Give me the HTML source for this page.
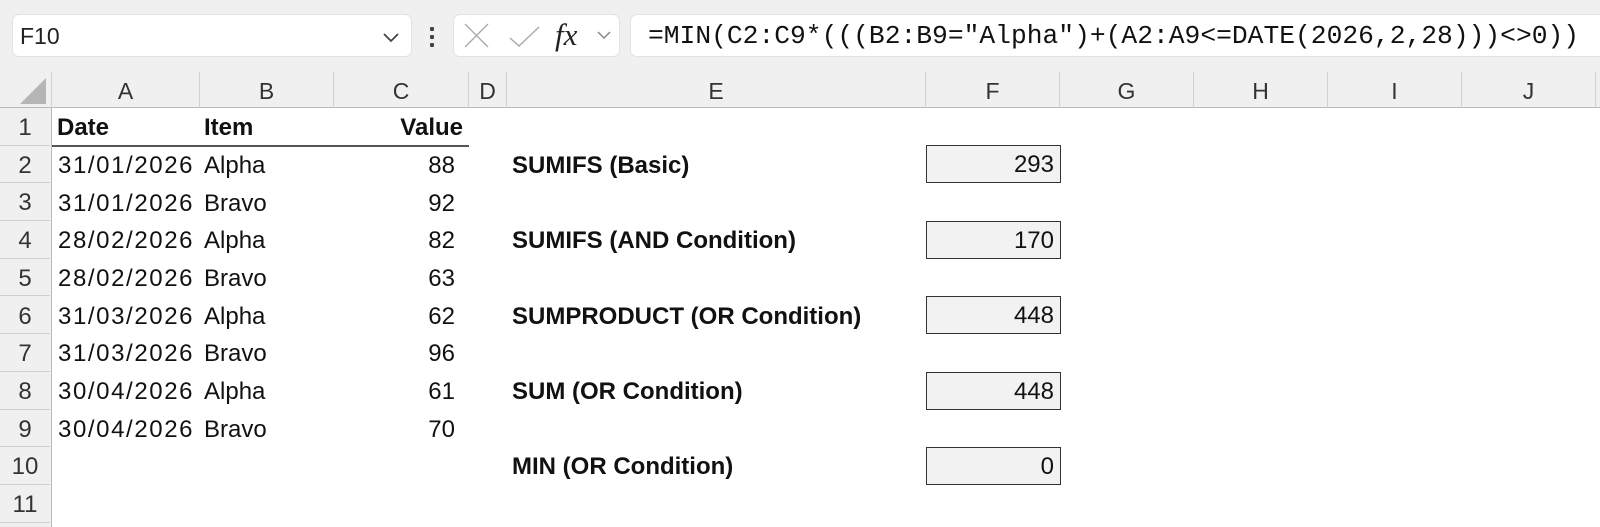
<!DOCTYPE html>
<html><head><style>
body{margin:0;width:1600px;height:527px;overflow:hidden;background:#fff;font-family:"Liberation Sans",sans-serif;position:relative}
.a{position:absolute}
.top{left:0;top:0;width:1600px;height:72px;background:#f0f0f0}
.box{background:#fff;border:1px solid #e2e2e2;border-radius:7px;box-sizing:border-box}
.hdr{top:72px;height:36px;background:#f0f0f0;border-bottom:1px solid #b8b8b8;box-sizing:border-box;font-size:23px;color:#333;text-align:center;line-height:38px}
.hc{border-right:1px solid #d0d0d0;box-sizing:border-box;height:36px;top:0}
.rh{left:0;width:52px;background:#f0f0f0;border-right:1px solid #b8b8b8;box-sizing:border-box}
.rn{left:0;width:50px;text-align:center;font-size:24px;color:#333;border-bottom:1px solid #d0d0d0;box-sizing:border-box;height:37.7px;line-height:39px}
.c{font-size:24px;color:#111;line-height:39px;height:38px;white-space:nowrap}
.d{letter-spacing:1.6px}
.b{font-weight:bold}
.val{left:926px;width:135px;height:38px;background:#f2f2f2;border:1px solid #333;box-sizing:border-box;text-align:right;padding-right:6px;font-size:24px;line-height:37px;color:#111}
</style></head><body>
<div class="a top"></div>
<div class="a box" style="left:12px;top:14px;width:400px;height:43px"></div>
<div class="a" style="left:20px;top:14px;font-size:23px;line-height:44px;color:#222">F10</div>
<svg class="a" style="left:382px;top:31px" width="18" height="12"><path d="M2 3l7 7 7-7" fill="none" stroke="#444" stroke-width="1.8"/></svg>
<div class="a" style="left:430px;top:27px;width:4px;height:4px;background:#444;border-radius:1px"></div>
<div class="a" style="left:430px;top:35px;width:4px;height:4px;background:#444;border-radius:1px"></div>
<div class="a" style="left:430px;top:43px;width:4px;height:4px;background:#444;border-radius:1px"></div>
<div class="a box" style="left:453px;top:14px;width:167px;height:43px"></div>
<svg class="a" style="left:460px;top:20px" width="160" height="32"><path d="M5 4l23 23M28 4L5 27" stroke="#aaa" stroke-width="1.4" fill="none"/><path d="M50 18l9 8 20-19" stroke="#aaa" stroke-width="1.4" fill="none"/><path d="M138 12l6 6 6-6" stroke="#888" stroke-width="1.5" fill="none"/></svg>
<div class="a" style="left:555px;top:14px;font-family:'Liberation Serif',serif;font-style:italic;font-size:31px;line-height:42px;color:#222">fx</div>
<div class="a box" style="left:630px;top:14px;width:980px;height:43px"></div>
<div class="a" style="left:648px;top:14px;font-family:'Liberation Mono',monospace;font-size:26.3px;line-height:44px;color:#111">=MIN(C2:C9*(((B2:B9="Alpha")+(A2:A9&lt;=DATE(2026,2,28)))&lt;&gt;0))</div>

<div class="a hdr" style="left:0;width:1600px">
<div class="a hc" style="left:0;width:52px"><svg width="52" height="36"><path d="M46 6L46 32L20 32Z" fill="#b5b5b5"/></svg></div>
<div class="a hc" style="left:52px;width:148px">A</div>
<div class="a hc" style="left:200px;width:134px">B</div>
<div class="a hc" style="left:334px;width:135px">C</div>
<div class="a hc" style="left:469px;width:38px">D</div>
<div class="a hc" style="left:507px;width:419px">E</div>
<div class="a hc" style="left:926px;width:134px">F</div>
<div class="a hc" style="left:1060px;width:134px">G</div>
<div class="a hc" style="left:1194px;width:134px">H</div>
<div class="a hc" style="left:1328px;width:134px">I</div>
<div class="a hc" style="left:1462px;width:134px">J</div>
</div>
<div class="a rh" style="top:108px;height:419px"></div>
<div class="a rn" style="top:108px">1</div>
<div class="a rn" style="top:145.7px">2</div>
<div class="a rn" style="top:183.4px">3</div>
<div class="a rn" style="top:221.1px">4</div>
<div class="a rn" style="top:258.8px">5</div>
<div class="a rn" style="top:296.5px">6</div>
<div class="a rn" style="top:334.2px">7</div>
<div class="a rn" style="top:371.9px">8</div>
<div class="a rn" style="top:409.6px">9</div>
<div class="a rn" style="top:447.3px">10</div>
<div class="a rn" style="top:485px">11</div>

<div class="a" style="left:52px;top:145px;width:417px;height:2px;background:#555"></div>
<div class="a c b" style="left:57px;top:108px">Date</div>
<div class="a c b" style="left:204px;top:108px">Item</div>
<div class="a c b" style="left:334px;top:108px;width:129px;text-align:right">Value</div>

<div class="a c d" style="left:58px;top:146px">31/01/2026</div><div class="a c" style="left:204px;top:146px">Alpha</div><div class="a c" style="left:334px;top:146px;width:121px;text-align:right">88</div>
<div class="a c d" style="left:58px;top:184px">31/01/2026</div><div class="a c" style="left:204px;top:184px">Bravo</div><div class="a c" style="left:334px;top:184px;width:121px;text-align:right">92</div>
<div class="a c d" style="left:58px;top:221px">28/02/2026</div><div class="a c" style="left:204px;top:221px">Alpha</div><div class="a c" style="left:334px;top:221px;width:121px;text-align:right">82</div>
<div class="a c d" style="left:58px;top:259px">28/02/2026</div><div class="a c" style="left:204px;top:259px">Bravo</div><div class="a c" style="left:334px;top:259px;width:121px;text-align:right">63</div>
<div class="a c d" style="left:58px;top:297px">31/03/2026</div><div class="a c" style="left:204px;top:297px">Alpha</div><div class="a c" style="left:334px;top:297px;width:121px;text-align:right">62</div>
<div class="a c d" style="left:58px;top:334px">31/03/2026</div><div class="a c" style="left:204px;top:334px">Bravo</div><div class="a c" style="left:334px;top:334px;width:121px;text-align:right">96</div>
<div class="a c d" style="left:58px;top:372px">30/04/2026</div><div class="a c" style="left:204px;top:372px">Alpha</div><div class="a c" style="left:334px;top:372px;width:121px;text-align:right">61</div>
<div class="a c d" style="left:58px;top:410px">30/04/2026</div><div class="a c" style="left:204px;top:410px">Bravo</div><div class="a c" style="left:334px;top:410px;width:121px;text-align:right">70</div>

<div class="a c b" style="left:512px;top:146px">SUMIFS (Basic)</div>
<div class="a c b" style="left:512px;top:221px">SUMIFS (AND Condition)</div>
<div class="a c b" style="left:512px;top:297px">SUMPRODUCT (OR Condition)</div>
<div class="a c b" style="left:512px;top:372px">SUM (OR Condition)</div>
<div class="a c b" style="left:512px;top:447px">MIN (OR Condition)</div>

<div class="a val" style="top:145px">293</div>
<div class="a val" style="top:221px">170</div>
<div class="a val" style="top:296px">448</div>
<div class="a val" style="top:372px">448</div>
<div class="a val" style="top:447px">0</div>
</body></html>
